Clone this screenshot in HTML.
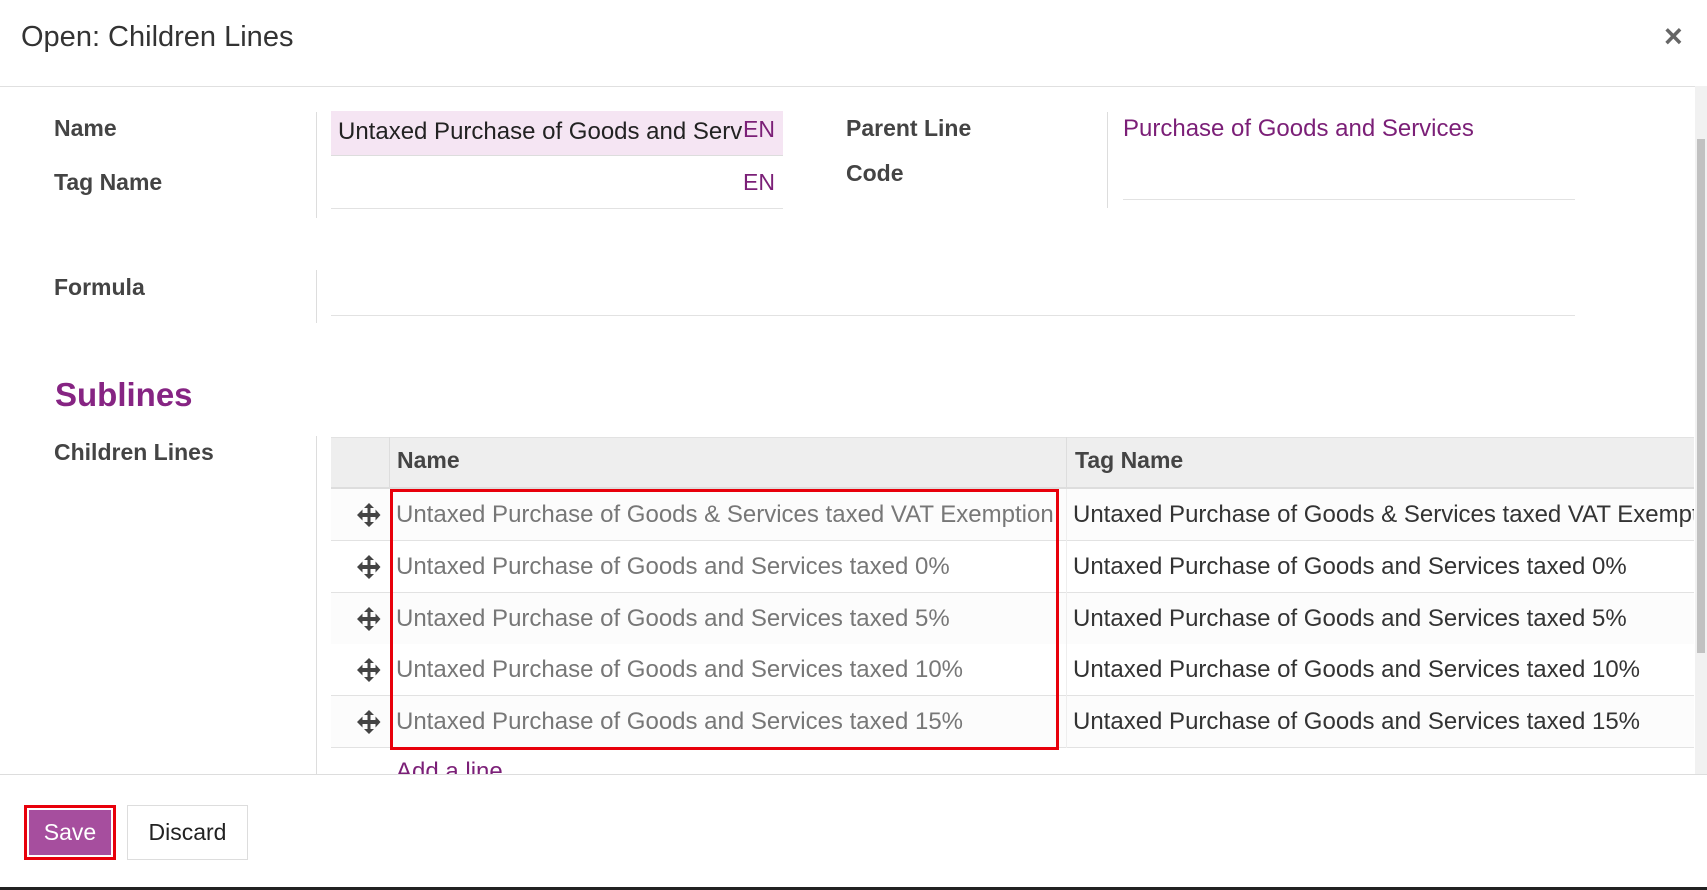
<!DOCTYPE html>
<html><head><meta charset="utf-8"><style>
*{box-sizing:border-box;margin:0;padding:0}
body{width:1707px;height:890px;overflow:hidden;background:#fff;font-family:"Liberation Sans",sans-serif;color:#333;position:relative}
.a{position:absolute;white-space:nowrap}
.lbl{font-size:23px;font-weight:bold;color:#444;line-height:26px}
.vl{position:absolute;width:1px;background:#ddd}
.hl{position:absolute;height:1px;background:#e2e2e2}
.row{position:absolute;left:331px;width:1363px;height:52px;border-bottom:1px solid #e2e2e2;background:#fcfcfc}
.row .n{position:absolute;left:65px;top:12px;font-size:24px;color:#777;white-space:nowrap;width:664px;overflow:hidden}
.row .t{position:absolute;left:742px;top:12px;font-size:24px;color:#333;white-space:nowrap;width:621px;overflow:hidden}
.row svg{position:absolute;left:25px;top:13px}
</style></head><body>
<div class="a" style="left:21px;top:21px;font-size:29px;color:#333">Open: Children Lines</div>
<div class="a" style="left:1664px;top:18px;font-size:32px;color:#666;font-weight:bold">×</div>
<div class="hl" style="left:0;top:86px;width:1707px;background:#e0e0e0"></div>

<div class="a lbl" style="left:54px;top:115px">Name</div>
<div class="a lbl" style="left:54px;top:169px">Tag Name</div>
<div class="a lbl" style="left:54px;top:274px">Formula</div>
<div class="vl" style="left:316px;top:112px;height:106px"></div>
<div class="vl" style="left:316px;top:270px;height:53px"></div>
<div class="a" style="left:331px;top:111px;width:452px;height:45px;background:#f5e5f3;border-bottom:1px solid #ddd"></div>
<div class="a" style="left:338px;top:118px;font-size:24px;color:#222;width:404px;overflow:hidden">Untaxed Purchase of Goods and Services</div>
<div class="a" style="left:743px;top:116px;font-size:23px;color:#7b1f77">EN</div>
<div class="a" style="left:743px;top:169px;font-size:23px;color:#7b1f77">EN</div>
<div class="hl" style="left:331px;top:208px;width:452px"></div>

<div class="a lbl" style="left:846px;top:115px">Parent Line</div>
<div class="a lbl" style="left:846px;top:160px">Code</div>
<div class="vl" style="left:1107px;top:112px;height:96px"></div>
<div class="a" style="left:1123px;top:115px;font-size:24px;color:#7b1f77">Purchase of Goods and Services</div>
<div class="hl" style="left:1123px;top:199px;width:452px"></div>
<div class="hl" style="left:331px;top:315px;width:1244px"></div>

<div class="a" style="left:55px;top:376px;font-size:33px;font-weight:bold;color:#862483">Sublines</div>
<div class="a lbl" style="left:54px;top:439px">Children Lines</div>
<div class="vl" style="left:316px;top:436px;height:338px"></div>

<div class="a" style="left:331px;top:437px;width:1363px;height:52px;background:#eee;border-top:1px solid #e2e2e2;border-bottom:2px solid #ddd"></div>
<div class="vl" style="left:389px;top:437px;height:52px"></div>
<div class="vl" style="left:1066px;top:437px;height:52px"></div>
<div class="a" style="left:397px;top:447px;font-size:23px;font-weight:bold;color:#444">Name</div>
<div class="a" style="left:1075px;top:447px;font-size:23px;font-weight:bold;color:#444">Tag Name</div>

<div class="row" style="top:489px"><svg width="26" height="26" viewBox="0 0 26 26"><path d="M13 1l5 5h-3.5v5h5V7.5l5 5.5-5 5.5V15h-5v5H18l-5 5-5-5h3.5v-5h-5v3.5L1 13l5.5-5.5V11h5V6H8z" fill="#444"/></svg><div class="n">Untaxed Purchase of Goods &amp; Services taxed VAT Exemption</div><div class="t">Untaxed Purchase of Goods &amp; Services taxed VAT Exemption</div></div>
<div class="row" style="top:541px;background:#fff"><svg width="26" height="26" viewBox="0 0 26 26"><path d="M13 1l5 5h-3.5v5h5V7.5l5 5.5-5 5.5V15h-5v5H18l-5 5-5-5h3.5v-5h-5v3.5L1 13l5.5-5.5V11h5V6H8z" fill="#444"/></svg><div class="n">Untaxed Purchase of Goods and Services taxed 0%</div><div class="t">Untaxed Purchase of Goods and Services taxed 0%</div></div>
<div class="row" style="top:593px"><svg width="26" height="26" viewBox="0 0 26 26"><path d="M13 1l5 5h-3.5v5h5V7.5l5 5.5-5 5.5V15h-5v5H18l-5 5-5-5h3.5v-5h-5v3.5L1 13l5.5-5.5V11h5V6H8z" fill="#444"/></svg><div class="n">Untaxed Purchase of Goods and Services taxed 5%</div><div class="t">Untaxed Purchase of Goods and Services taxed 5%</div></div>
<div class="row" style="top:644px;background:#fff"><svg width="26" height="26" viewBox="0 0 26 26"><path d="M13 1l5 5h-3.5v5h5V7.5l5 5.5-5 5.5V15h-5v5H18l-5 5-5-5h3.5v-5h-5v3.5L1 13l5.5-5.5V11h5V6H8z" fill="#444"/></svg><div class="n">Untaxed Purchase of Goods and Services taxed 10%</div><div class="t">Untaxed Purchase of Goods and Services taxed 10%</div></div>
<div class="row" style="top:696px"><svg width="26" height="26" viewBox="0 0 26 26"><path d="M13 1l5 5h-3.5v5h5V7.5l5 5.5-5 5.5V15h-5v5H18l-5 5-5-5h3.5v-5h-5v3.5L1 13l5.5-5.5V11h5V6H8z" fill="#444"/></svg><div class="n">Untaxed Purchase of Goods and Services taxed 15%</div><div class="t">Untaxed Purchase of Goods and Services taxed 15%</div></div>
<div class="vl" style="left:1066px;top:489px;height:259px;background:#eee"></div>
<div class="a" style="left:390px;top:489px;width:669px;height:261px;border:3px solid #e8000b"></div>

<div class="a" style="left:0;top:757px;width:1695px;height:17px;overflow:hidden"><div style="position:absolute;left:396px;top:1px;font-size:24px;color:#7b1f77">Add a line</div></div>
<div class="a" style="left:1695px;top:86px;width:12px;height:688px;background:#f1f1f1"></div>
<div class="a" style="left:1697px;top:139px;width:8px;height:514px;background:#c1c1c1"></div>
<div class="hl" style="left:0;top:774px;width:1707px;background:#ddd"></div>

<div class="a" style="left:24px;top:805px;width:92px;height:55px;border:3px solid #e8000b;padding:2px"><div style="width:100%;height:100%;background:#a64e9e;color:#fff;font-size:23px;text-align:center;line-height:45px">Save</div></div>
<div class="a" style="left:127px;top:805px;width:121px;height:55px;border:1px solid #ddd;font-size:23px;color:#222;text-align:center;line-height:53px">Discard</div>
<div class="a" style="left:0;top:887px;width:1707px;height:3px;background:#222"></div>
</body></html>
